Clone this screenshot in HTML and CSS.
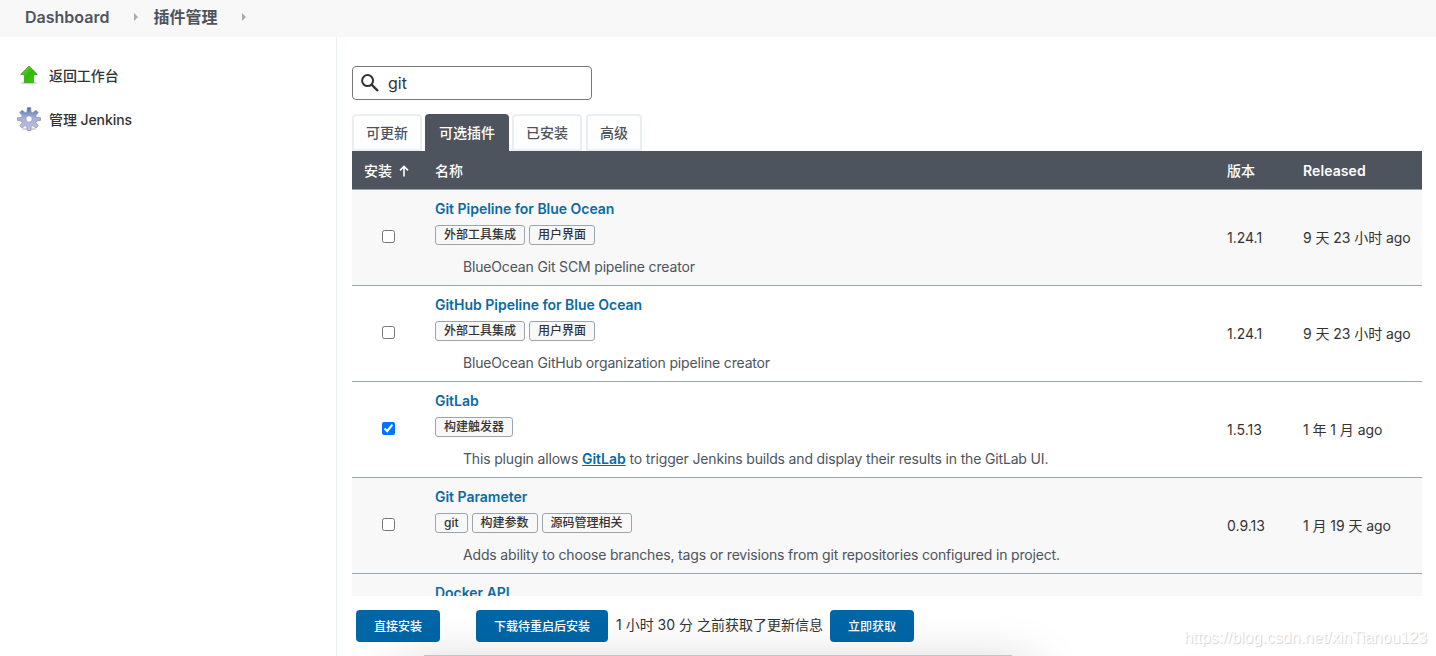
FILE: index.html
```html
<!DOCTYPE html>
<html lang="zh-CN">
<head>
    <meta charset="UTF-8">
    <meta name="viewport" content="width=device-width, initial-scale=1.0">
    <title>插件管理 [Jenkins]</title>
    <link rel="stylesheet" href="styles.css">
</head>
<body>

    <!-- Breadcrumbs -->
    <div class="breadcrumbs">
        <a href="#">Dashboard</a>
        <span class="arrow"></span>
        <a href="#">插件管理</a>
        <span class="arrow"></span>
    </div>

    <div class="page">
        <!-- Side panel -->
        <div class="side-panel">
            <a class="task" href="#">
                <svg width="24" height="24" viewBox="0 0 24 24">
                    <defs>
                        <linearGradient id="green" x1="0" y1="0" x2="1" y2="1">
                            <stop offset="0" stop-color="#7be03a"/>
                            <stop offset=".5" stop-color="#2fb90c"/>
                            <stop offset="1" stop-color="#3ecf12"/>
                        </linearGradient>
                    </defs>
                    <ellipse cx="12" cy="20" rx="8.5" ry="1.4" fill="#000" opacity=".16"/>
                    <path d="M12 3 L20.3 11.5 H16.6 V19.5 H7.4 V11.5 H3.7 Z" fill="url(#green)" stroke="#3a9a1c" stroke-width=".8" stroke-linejoin="round"/>
                </svg>
                <span>返回工作台</span>
            </a>
            <a class="task" href="#">
                <svg width="24" height="24" viewBox="0 0 24 24">
                    <defs>
                        <linearGradient id="gear" x1="0" y1="0" x2="0" y2="1">
                            <stop offset="0" stop-color="#5672a8"/>
                            <stop offset=".45" stop-color="#a3b1d8"/>
                            <stop offset="1" stop-color="#c9bfe4"/>
                        </linearGradient>
                    </defs>
                    <ellipse cx="12" cy="22" rx="7.5" ry="1.5" fill="#000" opacity=".16"/>
                    <path d="M10.3 .6 h3.4 l.3 4.4 1.7 .7 3.3-2.4 2.2 2.2 -2.4 3.3 .7 1.7 4 .3 v2.6 l-4 .6 -.7 1.7 2.4 3.1 -2.2 2.2 -3.1-2.4 -1.7 .7 -.5 4.2 h-3.4 l-.5-4.2 -1.7-.7 -3.1 2.4 -2.2-2.2 2.4-3.1 -.7-1.7 -4-.6 v-2.6 l4-.3 .7-1.7 -2.4-3.3 2.2-2.2 3.3 2.4 1.7-.7 z M12 8.8 a3.2 3.2 0 1 0 0 6.4 a3.2 3.2 0 1 0 0-6.4 z" fill="url(#gear)" fill-rule="evenodd" stroke="#77809f" stroke-width=".6" stroke-linejoin="round"/>
                </svg>
                <span>管理 Jenkins</span>
            </a>
        </div>

        <!-- Main panel -->
        <div class="main-panel">
            <div class="search">
                <svg width="20" height="20" viewBox="0 0 20 20" fill="none" stroke="#333" stroke-width="2">
                    <circle cx="7.6" cy="7.6" r="5.5"/>
                    <path d="M11.6 11.6 L18 18" stroke-width="2.4"/>
                </svg>
                <input type="text" value="git">
            </div>

            <div class="tabs">
                <a class="tab" href="#">可更新</a>
                <a class="tab active" href="#">可选插件</a>
                <a class="tab" href="#">已安装</a>
                <a class="tab" href="#">高级</a>
            </div>

            <div class="plugins-wrap">
                <table class="plugins">
                    <thead>
                        <tr>
                            <th class="col-install">安装
                                <svg class="sort" width="10" height="12" viewBox="0 0 10 12" fill="none" stroke="#fff" stroke-width="1.6">
                                    <path d="M5 11.5 V1.5 M1 5.4 L5 1.4 L9 5.4"/>
                                </svg>
                            </th>
                            <th>名称</th>
                            <th class="col-version">版本</th>
                            <th class="col-released">Released</th>
                        </tr>
                    </thead>
                    <tbody>
                        <tr class="odd">
                            <td class="check"><input type="checkbox"></td>
                            <td>
                                <a class="name" href="#">Git Pipeline for Blue Ocean</a>
                                <div class="labels"><span>外部工具集成</span><span>用户界面</span></div>
                                <div class="excerpt">BlueOcean Git SCM pipeline creator</div>
                            </td>
                            <td class="meta">1.24.1</td>
                            <td class="meta">9 天 23 小时 ago</td>
                        </tr>
                        <tr>
                            <td class="check"><input type="checkbox"></td>
                            <td>
                                <a class="name" href="#">GitHub Pipeline for Blue Ocean</a>
                                <div class="labels"><span>外部工具集成</span><span>用户界面</span></div>
                                <div class="excerpt">BlueOcean GitHub organization pipeline creator</div>
                            </td>
                            <td class="meta">1.24.1</td>
                            <td class="meta">9 天 23 小时 ago</td>
                        </tr>
                        <tr>
                            <td class="check"><input type="checkbox" checked></td>
                            <td>
                                <a class="name" href="#">GitLab</a>
                                <div class="labels"><span>构建触发器</span></div>
                                <div class="excerpt">This plugin allows <a href="#">GitLab</a> to trigger Jenkins builds and display their results in the GitLab UI.</div>
                            </td>
                            <td class="meta">1.5.13</td>
                            <td class="meta">1 年 1 月 ago</td>
                        </tr>
                        <tr class="odd">
                            <td class="check"><input type="checkbox"></td>
                            <td>
                                <a class="name" href="#">Git Parameter</a>
                                <div class="labels"><span>git</span><span>构建参数</span><span>源码管理相关</span></div>
                                <div class="excerpt">Adds ability to choose branches, tags or revisions from git repositories configured in project.</div>
                            </td>
                            <td class="meta">0.9.13</td>
                            <td class="meta">1 月 19 天 ago</td>
                        </tr>
                        <tr class="odd">
                            <td></td>
                            <td><a class="name" href="#">Docker API</a></td>
                            <td></td>
                            <td></td>
                        </tr>
                    </tbody>
                </table>
            </div>

            <!-- Bottom bar -->
            <div class="bottom-bar">
                <button class="btn">直接安装</button>
                <button class="btn download">下载待重启后安装</button>
                <span class="update-info">1 小时 30 分 之前获取了更新信息</span>
                <button class="btn">立即获取</button>
            </div>
        </div>
    </div>

    <div class="bottom-shadow"></div>
    <div class="watermark">https://blog.csdn.net/xinTianou123</div>

</body>
</html>
```

FILE: styles.css
```css
* {
    margin: 0;
    padding: 0;
    box-sizing: border-box;
}
body {
    height: 656px;
    position: relative;
    overflow: hidden;
    background: #fff;
    color: #333;
    font-family: Inter, "Noto Sans CJK SC", sans-serif;
    font-size: 14px;
}
a {
    text-decoration: none;
}
.breadcrumbs {
    height: 37px;
    padding: 0 25px 4px;
    background: #f8f8f8;
    display: flex;
    align-items: center;
    font-size: 16px;
    line-height: 24px;
}
.breadcrumbs a {
    color: #4d545d;
    font-weight: 600;
}
.arrow {
    border-left: 4px solid #aaa;
    border-top: 4px solid transparent;
    border-bottom: 4px solid transparent;
    margin: 0 15px 0 25px;
}
.page {
    display: flex;
    height: 619px;
}
.side-panel {
    width: 337px;
    padding: 26px 17px;
    border-right: 1px solid #eaeff2;
}
.task {
    display: flex;
    align-items: center;
    gap: 8px;
    height: 24px;
    margin-bottom: 20px;
    color: #333;
    font-weight: 500;
    letter-spacing: -.08px;
}
.main-panel {
    flex: 1;
    padding: 29px 14px 0 15px;
}
.search {
    display: flex;
    align-items: center;
    width: 240px;
    height: 34px;
    padding-left: 7px;
    border: 1px solid #777;
    border-radius: 4px;
}
.search input {
    width: 190px;
    margin-left: 8px;
    border: none;
    outline: none;
    color: #333;
    font-family: inherit;
    font-size: 16px;
}
.tabs {
    display: flex;
    gap: 4px;
    margin-top: 14px;
    height: 37px;
}
.tab {
    height: 37px;
    padding: 0 12px;
    border: 2px solid #eaeff2;
    border-radius: 4px 4px 0 0;
    color: #4d545d;
    font-weight: 500;
    line-height: 34px;
}
.tab.active {
    margin: 0 -1px;
    background: #4d545d;
    border-color: #4d545d;
    color: #fff;
}
.plugins-wrap {
    height: 445px;
    overflow: hidden;
}
.plugins {
    width: 1070px;
    table-layout: fixed;
    border-collapse: separate;
    border-spacing: 0;
}
.plugins th {
    height: 39px;
    padding: 2px 12px 0;
    background: #4d545d;
    border-bottom: 1px solid #9ba5b0;
    color: #fff;
    text-align: left;
    font-weight: 500;
    line-height: 20px;
    white-space: nowrap;
}
.plugins .col-install {
    width: 71px;
}
.plugins .col-version {
    width: 76px;
}
.plugins .col-released {
    width: 131px;
    font-weight: 600;
    letter-spacing: .08px;
}
.sort {
    margin-left: 3px;
    vertical-align: -1px;
}
.plugins td {
    height: 96px;
    padding: 9px 12px 0;
    border-bottom: 1px solid #9ba5b0;
    vertical-align: top;
    line-height: 20px;
    white-space: nowrap;
}
.odd td {
    background: #f8f8f8;
}
.plugins td.check {
    padding: 40px 0 0 30px;
}
.check input {
    display: block;
    width: 13px;
    height: 13px;
}
.plugins td.meta {
    padding-top: 38px;
}
.plugins td.meta:last-child {
    letter-spacing: -.06px;
}
.name {
    display: block;
    color: #0b6aa2;
    font-weight: 600;
    letter-spacing: -.02px;
}
.labels {
    display: flex;
    gap: 4px;
    margin-top: 6px;
}
.labels span {
    height: 20px;
    padding: 0 8px;
    background: #f8f8f8;
    border: 1px solid #9ba5b0;
    border-radius: 3px;
    font-size: 12px;
    font-weight: 500;
    line-height: 18px;
}
.excerpt {
    margin: 12px 0 0 28px;
    color: #4d545d;
    letter-spacing: -.165px;
}
.excerpt a {
    color: #0b6aa2;
    font-weight: 600;
    letter-spacing: 0;
    text-decoration: underline;
}
.bottom-bar {
    display: flex;
    align-items: center;
    padding: 14px 4px 0;
}
.btn {
    height: 32px;
    padding: 0 18px 2px;
    background: #0066a6;
    border: none;
    border-radius: 4px;
    color: #fff;
    font-family: inherit;
    font-size: 12px;
    font-weight: 500;
}
.download {
    margin-left: 36px;
}
.update-info {
    margin: 0 7px 0 8px;
    padding-bottom: 4px;
    white-space: nowrap;
}
.bottom-shadow {
    position: absolute;
    left: 424px;
    top: 655px;
    width: 588px;
    height: 1px;
    background: #c4c4c4;
    box-shadow: 0 34px 54px 20px rgba(0, 0, 0, .24);
    clip-path: inset(-70px -70px 0 -70px);
}
.watermark {
    position: absolute;
    right: 9px;
    bottom: 8px;
    color: #fff;
    font-family: "Liberation Sans", Arial, sans-serif;
    font-size: 16px;
    line-height: 20px;
    text-shadow: 1px 1px 1px #d0d0d0;
}
```
